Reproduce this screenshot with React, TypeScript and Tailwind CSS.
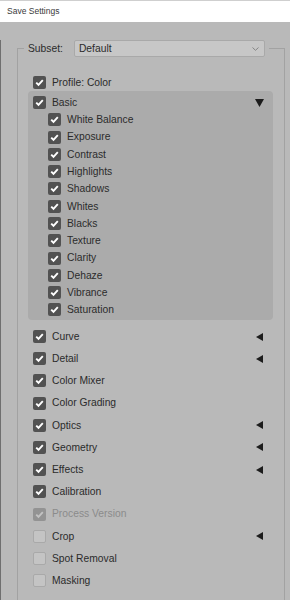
const basicItems = [
  "White Balance",
  "Exposure",
  "Contrast",
  "Highlights",
  "Shadows",
  "Whites",
  "Blacks",
  "Texture",
  "Clarity",
  "Dehaze",
  "Vibrance",
  "Saturation",
];

type Row = { label: string; state: "on" | "off" | "disabled"; arrow?: boolean };

const rows: Row[] = [
  { label: "Curve", state: "on", arrow: true },
  { label: "Detail", state: "on", arrow: true },
  { label: "Color Mixer", state: "on" },
  { label: "Color Grading", state: "on" },
  { label: "Optics", state: "on", arrow: true },
  { label: "Geometry", state: "on", arrow: true },
  { label: "Effects", state: "on", arrow: true },
  { label: "Calibration", state: "on" },
  { label: "Process Version", state: "disabled" },
  { label: "Crop", state: "off", arrow: true },
  { label: "Spot Removal", state: "off" },
  { label: "Masking", state: "off" },
];

function Check({ state = "on" }: { state?: "on" | "off" | "disabled" }) {
  if (state === "off") {
    return <span className="h-[13px] w-[13px] shrink-0 rounded-[2px] border border-[#a9a9a9] bg-[#c4c4c4]" />;
  }
  return (
    <span
      className={`flex h-[13px] w-[13px] shrink-0 items-center justify-center rounded-[2px] ${
        state === "disabled" ? "bg-[#939393]" : "bg-[#525252]"
      }`}
    >
      <svg width="11" height="11" viewBox="0 0 11 11">
        <path
          d="M2.2 5.6 L4.5 7.8 L8.8 3.2"
          fill="none"
          stroke={state === "disabled" ? "#c2c2c2" : "#ffffff"}
          strokeWidth="1.9"
        />
      </svg>
    </span>
  );
}

function LeftArrow() {
  return (
    <svg width="7" height="8" viewBox="0 0 7 8" className="shrink-0">
      <path d="M7 0 L0 4 L7 8 Z" fill="#1c1c1c" />
    </svg>
  );
}

export default function App() {
  return (
    <div className="min-h-screen bg-[#b9b9b9] text-[10.3px] text-[#2b2b2b]" style={{ fontFamily: '"Liberation Sans", Arial, sans-serif' }}>
      <div className="flex h-[22px] items-center border-t border-[#cfcfcf] bg-white pl-[7px] text-[8.5px] text-[#3a3a3a]">
        Save Settings
      </div>
      <div className="border-l border-[#6f6f6f] pb-10">
        <fieldset className="ml-[16px] mt-[18px] w-[268px] border border-[#a2a2a2] pb-[20px]">
          <legend className="ml-[6px] flex items-center gap-[11px] px-[4px]">
            <span>Subset:</span>
            <div className="flex h-[17px] w-[191px] items-center justify-between rounded-[2px] border border-[#a9a9a9] bg-[#c7c7c7] pl-[4px] pr-[5px]">
              <span>Default</span>
              <svg width="7" height="4" viewBox="0 0 7 4">
                <path d="M0.5 0.5 L3.5 3.3 L6.5 0.5" fill="none" stroke="#858585" strokeWidth="1" />
              </svg>
            </div>
          </legend>

          <div className="pt-[17px]">
            <div className="ml-[10px] flex h-[17px] w-[245px] items-center gap-[6px] pl-[5px]">
              <Check />
              <span>Profile: Color</span>
            </div>

            <div className="ml-[10px] w-[245px] rounded-[4px] bg-[#ababab] pb-[2px] pt-[3px]">
              <div className="flex h-[17.27px] items-center gap-[6px] pl-[5px] pr-[9px]">
                <Check />
                <span className="flex-1">Basic</span>
                <svg width="9" height="8" viewBox="0 0 9 8">
                  <path d="M0 0 L9 0 L4.5 8 Z" fill="#1c1c1c" />
                </svg>
              </div>
              {basicItems.map((item) => (
                <div key={item} className="flex h-[17.27px] items-center gap-[6px] pl-[20px]">
                  <Check />
                  <span>{item}</span>
                </div>
              ))}
            </div>

            <div className="mt-[5px]">
              {rows.map((r) => (
                <div key={r.label} className="ml-[10px] flex h-[22.2px] w-[245px] items-center gap-[6px] pl-[5px] pr-[10px]">
                  <Check state={r.state} />
                  <span className={`flex-1 ${r.state === "disabled" ? "text-[#8b8b8b]" : ""}`}>{r.label}</span>
                  {r.arrow && <LeftArrow />}
                </div>
              ))}
            </div>
          </div>
        </fieldset>
      </div>
    </div>
  );
}
